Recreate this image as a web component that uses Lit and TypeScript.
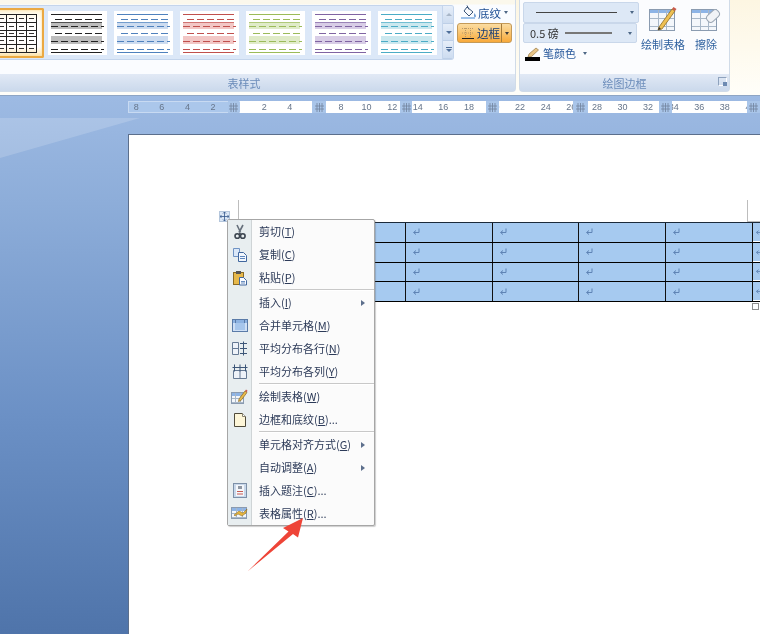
import { LitElement, html, css, svg } from "lit";
import { customElement } from "lit/decorators.js";

const dash = (y: number, c: string, x1 = 3, x2 = 56) => svg`<line x1=${x1} x2=${x2} y1=${y} y2=${y} stroke=${c} stroke-width="1" stroke-dasharray="7 3"/>`;
const thumb = (c: string, band: string) => html`<div class="thumb"><svg width="59" height="44" viewBox="0 0 59 44">
  <rect x="3" y="11" width="51" height="7" fill=${band}/><rect x="3" y="25" width="51" height="8" fill=${band}/>
  <line x1="3" x2="54" y1="3.5" y2="3.5" stroke=${c}/><line x1="3" x2="54" y1="11.5" y2="11.5" stroke=${c} stroke-opacity=".7"/>
  ${dash(8.5, c, 7)}${dash(15.5, c, 3)}${dash(22.5, c, 7)}${dash(30.5, c, 3)}${dash(38.5, c, 3)}
  <line x1="3" x2="54" y1="41.5" y2="41.5" stroke=${c}/></svg></div>`;

const gridThumb = html`<div class="thumb first"><svg width="66" height="44" viewBox="0 0 66 44">
  <g stroke="#222" fill="none"><line x1="0" x2="60.500" y1="3.500" y2="3.500"/><line x1="0" x2="60.500" y1="41.500" y2="41.500"/>
  ${[0, 10, 20, 30, 40, 50, 60].map(x => svg`<line x1=${x + .5} x2=${x + .5} y1="3" y2="42"/>`)}
  ${[11.5, 19.5, 25.5, 33.5].map(y => svg`<line x1="0" x2="60" y1=${y} y2=${y}/>`)}
  ${[7.5, 15.5, 22.5, 29.5, 37.5].map(y => [0, 10, 20, 30, 40, 50].map(x => svg`<line x1=${x + 3} x2=${x + 8} y1=${y} y2=${y} stroke="#333"/>`))}</g></svg></div>`;

const tableIcon = (w = 16, h = 13) => {
  const c = "#8a9bb0";
  return svg`<rect x=".5" y=".5" width=${w - 1} height=${h - 1} fill="#f4f7fb" stroke=${c}/>
  <rect x="1" y="1" width=${w - 2} height="3" fill="#8db4e6"/>
  ${[1 / 3, 2 / 3].map(f => svg`<line x1=${Math.round(w * f) + .5} x2=${Math.round(w * f) + .5} y1="1" y2=${h - 1} stroke="#a9b8c8"/>`)}
  ${[1 / 3, 2 / 3].map(f => svg`<line x1="1" x2=${w - 1} y1=${Math.round(h * f) + 2.5} y2=${Math.round(h * f) + 2.5} stroke="#a9b8c8"/>`)}`;
};

const icons: Record<string, unknown> = {
  cut: svg`<svg width="16" height="16" viewBox="0 0 16 16"><path d="M5 1l3.600 7.500M11 1L7 8.500" stroke="#66707c" stroke-width="1.600" fill="none"/><circle cx="5.300" cy="12" r="2.300" fill="none" stroke="#3c4550" stroke-width="1.600"/><circle cx="10.800" cy="12" r="2.300" fill="none" stroke="#3c4550" stroke-width="1.600"/><path d="M7 9l1.200 1 1-1" stroke="#3c4550" fill="none"/></svg>`,
  copy: svg`<svg width="16" height="16" viewBox="0 0 16 16"><path d="M1.500 1.500h6l0 8h-6z" fill="#dbe8f8" stroke="#6f93c4"/><path d="M6.500 5.500h5l3 3v6h-8z" fill="#f2f7fd" stroke="#41679e"/><path d="M8 9.500h5M8 11.500h5" stroke="#5e86bd"/></svg>`,
  paste: svg`<svg width="16" height="16" viewBox="0 0 16 16"><rect x="1.500" y="2.500" width="10" height="12" fill="#e7b94b" stroke="#8a6a24"/><rect x="4" y="1" width="5" height="3" fill="#555"/><path d="M7.500 7.500h4l3 3v4.500h-7z" fill="#fafcff" stroke="#41679e"/><path d="M9 11.500h4M9 13h4" stroke="#6b8fc0"/></svg>`,
  merge: svg`<svg width="16" height="14" viewBox="0 0 16 14"><rect x=".5" y=".5" width="15" height="12" fill="#cfe0f5" stroke="#5a7ba8"/><rect x="1" y="1" width="14" height="3" fill="#8db3e2"/><rect x="3" y="4" width="10" height="7" fill="#a6c6ec"/><path d="M3.500 1v3M12.500 1v3" stroke="#5a7ba8"/></svg>`,
  rows: svg`<svg width="16" height="15" viewBox="0 0 16 15"><path d="M.5 1.500h6v12h-6zM.5 7.500h6" fill="#eef3f9" stroke="#667a94"/><path d="M11.500 .5v14M8 2.500h7M8 7.500h7M8 12.500h7" stroke="#3c5678" fill="none"/></svg>`,
  cols: svg`<svg width="16" height="15" viewBox="0 0 16 15"><path d="M1.500 6.500h13v8h-13zM8 6.500v8" fill="#eef3f9" stroke="#667a94"/><path d="M.5 3.500h15M2.500 .5v7M8 .5v7M13.500 .5v7" stroke="#3c5678" fill="none"/></svg>`,
  draw: svg`<svg width="17" height="16" viewBox="0 0 17 16"><g transform="translate(0 3)">${tableIcon(13, 12)}</g><path d="M8 10l6-8 2 1.500-6 8-2.500 1z" fill="#e9b949" stroke="#8a6a24" stroke-width=".7"/><path d="M14 2l1-1.400 1.600 1.200-1 1.400z" fill="#c9584a"/></svg>`,
  border: svg`<svg width="14" height="16" viewBox="0 0 14 16"><path d="M1.500 1.500h8l3 3v10h-11z" fill="#fdf6d8" stroke="#4f4a3a"/><path d="M9.500 1.500v3h3" fill="#fff" stroke="#8a8570"/></svg>`,
  caption: svg`<svg width="14" height="15" viewBox="0 0 14 15"><rect x=".5" y=".5" width="13" height="14" fill="#c9d8ea" stroke="#7d90a8"/><rect x="3" y="2" width="8" height="11" fill="#f4f7fb"/><rect x="5" y="3" width="4" height="3" fill="#8f97a3"/><path d="M4 8.500h6M4 11h6" stroke="#c65b52"/></svg>`,
  props: svg`<svg width="17" height="15" viewBox="0 0 17 15"><g transform="translate(0 1)">${tableIcon(16, 12)}</g><path d="M3 9l5-4 4 2 4-4-1 4-4 3-4-2-3 2z" fill="#e5b43e" stroke="#7d6123" stroke-width=".5"/></svg>`,
};

type Row = { k: string; t?: string; m?: string; e?: string; i?: string; sub?: boolean };
const rows: Row[] = [
  { k: "i", t: "剪切", m: "T", i: "cut" }, { k: "i", t: "复制", m: "C", i: "copy" }, { k: "i", t: "粘贴", m: "P", i: "paste" },
  { k: "s" },
  { k: "i", t: "插入", m: "I", sub: true }, { k: "i", t: "合并单元格", m: "M", i: "merge" }, { k: "i", t: "平均分布各行", m: "N", i: "rows" }, { k: "i", t: "平均分布各列", m: "Y", i: "cols" },
  { k: "s" },
  { k: "i", t: "绘制表格", m: "W", i: "draw" }, { k: "i", t: "边框和底纹", m: "B", e: "...", i: "border" },
  { k: "s" },
  { k: "i", t: "单元格对齐方式", m: "G", sub: true }, { k: "i", t: "自动调整", m: "A", sub: true }, { k: "i", t: "插入题注", m: "C", e: "...", i: "caption" }, { k: "i", t: "表格属性", m: "R", e: "...", i: "props" },
];

const rulerLabels = ["8", "6", "4", "2", "", "2", "4", "6", "8", "10", "12", "14", "16", "18", "20", "22", "24", "26", "28", "30", "32", "34", "36", "38", "40"];
const rulerMarks = [[100, 11], [184, 14], [272, 12], [358, 13], [445, 15], [531, 13], [619, 13]];
const ret = svg`<svg class="ret" width="9" height="8" viewBox="0 0 9 8"><path d="M7 .5v4H2M4 2.500L1.500 4.500 4 6.500" fill="none" stroke="#5f84b5" stroke-width="1"/></svg>`;

@customElement("app-root")
export class AppRoot extends LitElement {
  static styles = css`
    :host { display: block; width: 760px; height: 634px; overflow: hidden; position: relative; font-family: "Noto Sans CJK SC", "Liberation Sans", sans-serif; font-size: 11px; }
    .soft { width: 760px; height: 634px; position: relative; overflow: hidden; filter: blur(.35px); }
    .ribbon { height: 95px; display: flex; gap: 3px; background: linear-gradient(#fdf6e2, #fffef9); border-bottom: 1px solid #8ea5c4; box-sizing: content-box; overflow: hidden; }
    .group { height: 92px; display: flex; flex-direction: column; box-sizing: border-box; border: 1px solid #d0dbe8; border-top: none; border-radius: 0 0 4px 4px; background: #fbfcfe; flex: none; }
    .g1 { width: 544px; margin-left: -28px; background: linear-gradient(#fbf8ec 4px, #fafcff 5px); }
    .g2 { width: 211px; position: relative; }
    .body { flex: 1; display: flex; min-height: 0; }
    .band { height: 17px; display: flex; align-items: center; justify-content: center; background: linear-gradient(#e1e9f5, #cbd9ec); color: #6b8cba; position: relative; flex: none; }
    .gallery { width: 481px; height: 55px; margin-top: 5px; box-sizing: border-box; display: flex; align-items: center; gap: 7px; background: #dce8f8; border: 1px solid #c4d5ec; border-left: none; border-radius: 0 3px 3px 0; overflow: hidden; flex: none; }
    .thumb { background: #fff; width: 59px; height: 44px; flex: none; }
    .thumb svg { display: block; flex: none; }
    .thumb.first { width: 71px; height: 50px; margin-right: -3px; display: flex; align-items: center; justify-content: flex-end; border: 2px solid #eba942; border-left: none; box-sizing: border-box; box-shadow: inset 0 0 3px #f9d68a; border-radius: 0 2px 2px 0; background: linear-gradient(#fff8df, #fff 25%, #fff 80%, #fde7b4); }
    .scroll { width: 12px; height: 53px; margin-left: -2px; flex: none; display: flex; flex-direction: column; border-left: 1px solid #c4d5ec; background: #d5e2f3; }
    .scroll div { flex: 1; display: flex; align-items: center; justify-content: center; flex-direction: column; gap: 1px; border-bottom: 1px solid #bdcfe7; background: linear-gradient(#e6eef9, #cddcf0); }
    .up { width: 0; height: 0; border: 3px solid transparent; border-bottom-color: #a8b6c8; border-top: none; }
    .dn { width: 0; height: 0; border: 3px solid transparent; border-top-color: #4f6f9a; border-bottom: none; }
    .bar { width: 6px; height: 1px; background: #4f6f9a; }
    .side { display: flex; flex-direction: column; width: 57px; margin-left: 3px; padding-top: 5px; gap: 3px; flex: none; }
    .sbtn { display: flex; align-items: center; height: 15px; color: #1e4f94; padding-left: 4px; font-size: 11.5px; white-space: nowrap; }
    .sbtn svg, .sbtn span { flex: none; }
    .sbtn .caret { margin-left: 3px; }
    .caret { width: 0; height: 0; border: 2.5px solid transparent; border-top: 3px solid #4d6785; border-bottom: none; flex: none; }
    .sbtn.on { height: 20px; width: 55px; box-sizing: border-box; padding-left: 3px; border: 1px solid #c49a58; border-radius: 3px; background: linear-gradient(#fbdca1, #f9c46f 50%, #f8a93a); color: #1b3f75; position: relative; }
    .sbtn.on .txt { margin-left: 1px; }
    .sbtn.on .div { width: 1px; height: 18px; background: #a57c3c; margin-left: 1px; }
    .sbtn.on .caret { margin-left: 3px; border-top-color: #3a3a3a; }
    .col { width: 120px; padding: 2px 0 0 3px; display: flex; flex-direction: column; flex: none; box-sizing: border-box; }
    .dd { display: flex; align-items: center; box-sizing: border-box; background: #dde8f6; border: 1px solid #c9d7ea; border-radius: 2px; flex: none; }
    .dd.a { width: 116px; height: 21px; padding: 0 4px 0 12px; }
    .dd.b { width: 114px; height: 20px; padding: 0 4px 0 6px; color: #333; gap: 6px; }
    .dd .ln { flex: 1; height: 1px; background: #444; margin-right: 13px; }
    .dd.b .ln { height: 2px; background: #777; margin-right: 10px; }
    .pen { display: flex; align-items: center; height: 18px; margin-top: 1px; gap: 2px; color: #2a5a9d; padding-left: 2px; }
    .pen .caret { margin-left: 5px; }
    .big { display: flex; flex-direction: column; align-items: center; padding-top: 6px; gap: 5px; color: #2f619f; line-height: 14px; flex: none; }
    .b1 { width: 46px; }
    .b2 { width: 40px; }
    .launch { position: absolute; right: 2px; top: 3px; width: 7px; height: 7px; border: 1px solid #8ea2bd; border-right-color: #fff; border-bottom-color: #fff; }
    .launch::after { content: ""; position: absolute; right: -1px; bottom: -1px; width: 4px; height: 4px; background: #6e8bb2; }
    .work { height: 538px; position: relative; background: linear-gradient(#9dbae3 0, #8dadd9 20%, #6b90c5 60%, #4f74aa 100%); overflow: hidden; }
    .shine { position: absolute; left: 0; top: 22px; width: 140px; height: 40px; background: rgba(255,255,255,.17); clip-path: polygon(0 0, 100% 0, 0 100%); }
    .ruler { position: relative; margin: 5px 0 0 128px; height: 12px; overflow: hidden; display: flex; background: linear-gradient(90deg, #abc7eb 112px, #fff 112px); color: #66758a; font: 9px/12px "Liberation Sans", sans-serif; box-shadow: inset 0 0 0 1px rgba(255,255,255,.35); }
    .tick { width: 25.6px; flex: none; text-align: center; }
    .tick:first-child { margin-left: -4.6px; }
    .mark { position: absolute; top: 0; height: 12px; background: #a9c5e9; display: flex; align-items: center; justify-content: center; }
    .mark svg { display: block; }
    .page { position: relative; margin: 21px 0 0 128px; height: 500px; background: #fff; border-left: 1px solid #5c6f8c; border-top: 1px solid #5c6f8c; box-sizing: border-box; padding: 87px 0 0 104px; }
    .tablewrap { position: relative; width: 520px; }
    .tbl { width: 534px; display: grid; grid-template-columns: repeat(6, 86.6px) 10px; background: #000; row-gap: 1px; border-top: 1px solid #1c2a3a; border-bottom: 1px solid #000; }
    .c { height: 18.8px; background: #a6caf0; display: flex; align-items: center; padding-left: 6px; box-sizing: border-box; border-right: 1px solid #111; }
    .c.end { border-right: none; padding-left: 2px; border-bottom: 1px solid #fff; }
    .ret { display: block; }
    .crop { position: absolute; top: -22px; width: 1px; height: 22px; background: #bdbdbd; }
    .crop.l { left: 5px; }
    .crop.r { left: 514px; }
    .crop.r::after { content: ""; position: absolute; left: 0; top: 21px; width: 14px; height: 1px; background: #bdbdbd; }
    .handle { position: absolute; left: -14px; top: -11px; width: 11px; height: 11px; box-sizing: border-box; background: #dbe7f5; border: 1px solid #b4c6dc; display: flex; align-items: center; justify-content: center; }
    .grip { position: absolute; left: 519px; top: 81px; width: 5px; height: 5px; border: 1px solid #8d8d8d; background: #fff; }
    .menu { position: absolute; left: 227px; top: 219px; width: 148px; height: 307px; box-sizing: border-box; background: #fbfbfb; border: 1px solid #a6a6a6; border-radius: 2px; box-shadow: 1px 1px 1px rgba(90,90,90,.3); color: #2c3a58; }
    .it { height: 23px; display: flex; align-items: center; }
    .gut { width: 23px; height: 100%; flex: none; background: #e8eef0; border-right: 1px solid #cfd4d6; display: flex; align-items: center; justify-content: center; }
    .gut svg { display: block; }
    .lbl { padding: 0 0 2px 7px; flex: 1; white-space: nowrap; }
    .tri { width: 0; height: 0; border: 3px solid transparent; border-left: 4px solid #5d6f8c; border-right: none; margin-right: 9px; }
    .sep { height: 2px; display: flex; }
    .sep .gut { height: 2px; }
    .sep i { flex: 1; margin-left: 7px; background: linear-gradient(#c8c8c8 1px, #fff 1px); }
    .arrow { position: absolute; left: 0; top: 0; }
  `;

  render() {
    const cells = [0, 1, 2, 3].map(() => html`
      ${[0, 1, 2, 3, 4, 5].map(i => html`<div class="c">${i < 2 ? "" : ret}</div>`)}
      <div class="c end">${ret}</div>`);
    return html`<div class="soft">
      <div class="ribbon">
        <section class="group g1">
          <div class="body">
            <div class="gallery">
              ${gridThumb}
              ${thumb("#222", "#bdbdbd")}${thumb("#4f81bd", "#cddcf0")}${thumb("#c0504d", "#f2c7c5")}${thumb("#9bbb59", "#e0ebc9")}${thumb("#8064a2", "#d8cde6")}${thumb("#4bacc6", "#cbe8ef")}
              <div class="scroll"><div><span class="up"></span></div><div><span class="dn"></span></div><div><span class="bar"></span><span class="dn"></span></div></div>
            </div>
            <div class="side">
              <div class="sbtn"><svg width="17" height="15" viewBox="0 0 17 15"><path d="M6 2l6 5-4 4-5-5z" fill="#f7f9fc" stroke="#3b5578"/><path d="M6 .5l2 4" stroke="#3b5578"/><path d="M13.500 8c1 2 2 3 1 4s-2-1-1-4z" fill="#5e8fca"/><rect x="0" y="12" width="14" height="2" fill="#9ec1e8"/></svg><span>底纹</span><span class="caret"></span></div>
              <div class="sbtn on"><svg width="15" height="13" viewBox="0 0 15 13"><path d="M1 1.500h12M1 6h12M4.500 1v10M9.500 1v10" stroke="#b99968" stroke-dasharray="1 1" fill="none"/><path d="M1 11.500h12" stroke="#222"/></svg><span class="txt">边框</span><span class="div"></span><span class="caret"></span></div>
            </div>
          </div>
          <div class="band">表样式</div>
        </section>
        <section class="group g2">
          <div class="body">
            <div class="col">
              <div class="dd a"><span class="ln"></span><span class="caret"></span></div>
              <div class="dd b"><span>0.5 磅</span><span class="ln"></span><span class="caret"></span></div>
              <div class="pen"><svg width="16" height="15" viewBox="0 0 16 15"><path d="M4 8l7-6 2.500 2-7 6.500L3 11z" fill="#e7c486" stroke="#9a7a44" stroke-width=".7"/><rect x="0" y="11" width="15" height="4" fill="#000"/></svg><span>笔颜色</span><span class="caret"></span></div>
            </div>
            <div class="big b1">
              <svg width="28" height="26" viewBox="0 0 28 26"><g transform="translate(0 3)">${tableIcon(26, 22)}</g><path d="M10 21l13-18 3 2-13 18-4 1z" fill="#eec053" stroke="#8e6c24" stroke-width=".8"/><path d="M23 3l1.500-2 3 2-1.500 2z" fill="#c95b4b"/><path d="M10 21l-1 3 3-1z" fill="#333"/></svg>
              <span>绘制表格</span>
            </div>
            <div class="big b2">
              <svg width="30" height="26" viewBox="0 0 30 26"><g transform="translate(0 3)">${tableIcon(26, 22)}</g><rect x="15" y="6" width="14" height="8" rx="3.500" transform="rotate(-42 22 10)" fill="#f1f3f6" stroke="#9aa5b2"/></svg>
              <span>擦除</span>
            </div>
          </div>
          <div class="band">绘图边框<span class="launch"></span></div>
        </section>
      </div>
      <div class="work">
        <div class="shine"></div>
        <div class="ruler">
          ${rulerLabels.map(l => html`<span class="tick">${l}</span>`)}
          ${rulerMarks.map(([x, w]) => html`<span class="mark" style="left:${x}px;width:${w}px"><svg width="9" height="9" viewBox="0 0 9 9"><path d="M2 0v9M4.500 0v9M7 0v9M0 3h9M0 6h9" stroke="#71839c" stroke-width=".8" fill="none"/></svg></span>`)}
        </div>
        <div class="page">
          <div class="tablewrap">
            <span class="crop l"></span><span class="crop r"></span>
            <span class="handle"><svg width="9" height="9" viewBox="0 0 9 9"><path d="M4.500 0v9M0 4.500h9M3 1.500L4.500 0 6 1.500M3 7.500L4.500 9 6 7.500M1.500 3L0 4.500 1.500 6M7.500 3L9 4.500 7.500 6" fill="none" stroke="#34578a" stroke-width=".8"/></svg></span>
            <div class="tbl">${cells}</div>
            <span class="grip"></span>
          </div>
        </div>
      </div>
      <div class="menu">
        ${rows.map(r => r.k === "s"
          ? html`<div class="sep"><div class="gut"></div><i></i></div>`
          : html`<div class="it"><div class="gut">${r.i ? icons[r.i] : ""}</div><span class="lbl">${r.t}(<u>${r.m}</u>)${r.e ?? ""}</span>${r.sub ? html`<span class="tri"></span>` : ""}</div>`)}
      </div>
      <svg class="arrow" width="760" height="634"><polygon points="247.500,571.500 288.500,531.500 283,528 303,518 298,537.500 293,534" fill="#ee4437"/></svg>
    </div>`;
  }
}
